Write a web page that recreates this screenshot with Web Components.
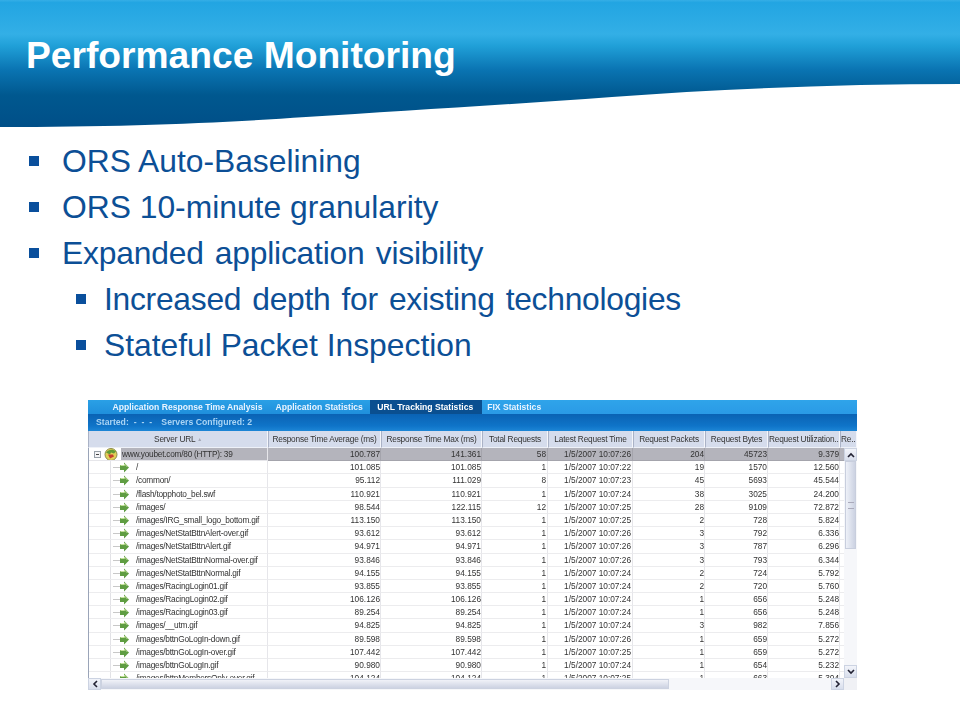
<!DOCTYPE html>
<html>
<head>
<meta charset="utf-8">
<title>Performance Monitoring</title>
<style>
html, body { margin: 0; background: #fff; }
body { width: 960px; height: 720px; overflow: hidden; font-family: "Liberation Sans", Arial, sans-serif; }
</style>
</head>
<body>
<slide-header>Performance Monitoring</slide-header>
<slide-bullets>
  <slide-bullet>ORS Auto-Baselining</slide-bullet>
  <slide-bullet>ORS 10-minute granularity</slide-bullet>
  <slide-bullet spread>Expanded application visibility</slide-bullet>
  <slide-bullet sub spread>Increased depth for existing technologies</slide-bullet>
  <slide-bullet sub>Stateful Packet Inspection</slide-bullet>
</slide-bullets>
<stat-window></stat-window>

<script>
class SlideHeader extends HTMLElement {
    constructor() {
        super();
        this.attachShadow({ mode: 'open' });
        this.shadowRoot.innerHTML = `
            <style>
                :host {
                    display: block;
                    height: 128px;
                    box-sizing: border-box;
                    padding: 34px 0 0 26px;
                    background-image: url("data:image/svg+xml,%3Csvg xmlns='http://www.w3.org/2000/svg' width='960' height='128'%3E%3Cdefs%3E%3ClinearGradient id='g' x1='0' y1='0' x2='0' y2='1'%3E%3Cstop offset='0' stop-color='%2335aee6'/%3E%3Cstop offset='.02' stop-color='%2322a5e2'/%3E%3Cstop offset='.27' stop-color='%2333afe6'/%3E%3Cstop offset='.36' stop-color='%2320a0d8'/%3E%3Cstop offset='.55' stop-color='%230a74b2'/%3E%3Cstop offset='.75' stop-color='%2300588f'/%3E%3Cstop offset='1' stop-color='%23004f88'/%3E%3C/linearGradient%3E%3C/defs%3E%3Cpath fill='url(%23g)' d='M0 0H960V84C840 84 720 89 612 97C500 105 400 111 306 117C220 123 120 127 0 127Z'/%3E%3C/svg%3E");
                    color: #fff;
                    font: bold 37.2px/42px "Liberation Sans", Arial, sans-serif;
                }
            </style>
            <slot></slot>
        `;
    }
}

class SlideBullets extends HTMLElement {
    constructor() {
        super();
        this.attachShadow({ mode: 'open' });
        this.shadowRoot.innerHTML = `
            <style>
                :host {
                    display: flex;
                    flex-direction: column;
                    padding: 10px 0 0 29px;
                    height: 272px;
                    box-sizing: border-box;
                    color: #0c4f96;
                    font: 31.8px/46px "Liberation Sans", Arial, sans-serif;
                }
            </style>
            <slot></slot>
        `;
    }
}

class SlideBullet extends HTMLElement {
    constructor() {
        super();
        this.attachShadow({ mode: 'open' });
        this.shadowRoot.innerHTML = `
            <style>
                :host {
                    display: flex;
                    align-items: center;
                    height: 46px;
                }
                :host([sub]) { padding-left: 47px; }
                :host([spread]) { letter-spacing: -0.2px; word-spacing: 2.5px; }
                :host([sub][spread]) { letter-spacing: -0.27px; }
                .mark {
                    flex: none;
                    width: 10px;
                    height: 10px;
                    margin-right: 23px;
                    background: #0a4f9c;
                }
                :host([sub]) .mark { margin-right: 18px; }
            </style>
            <span class="mark"></span>
            <span><slot></slot></span>
        `;
    }
}

const COLUMNS = '180px 113px 101px 66px 85px 72px 63px 72px 17px';

class StatTabs extends HTMLElement {
    constructor() {
        super();
        this.attachShadow({ mode: 'open' });
        this.shadowRoot.innerHTML = `
            <style>
                :host {
                    display: flex;
                    height: 14px;
                    padding-left: 18px;
                    background: linear-gradient(#2aa0e6, #1f8fdc);
                    color: #e8f4ff;
                    font: bold 8.6px/14px "Liberation Sans", Arial, sans-serif;
                }
                span { padding: 0 6.5px; white-space: nowrap; }
                .stats { padding-right: 7.5px; }
                .on { background: #0a4f90; color: #fff; padding: 0 9px 0 7px; }
                .fix { flex: 1; padding-left: 5px; background: linear-gradient(#2fa4ea, #2a9ae6); }
            </style>
            <span>Application Response Time Analysis</span>
            <span class="stats">Application Statistics</span>
            <span class="on">URL Tracking Statistics</span>
            <span class="fix">FIX Statistics</span>
        `;
    }
}

class StatStatus extends HTMLElement {
    constructor() {
        super();
        this.attachShadow({ mode: 'open' });
        this.shadowRoot.innerHTML = `
            <style>
                :host {
                    display: flex;
                    height: 17px;
                    padding-left: 8px;
                    background: linear-gradient(#0a62b4, #0f74c8 70%, #1c86d6);
                    color: #a9d4f4;
                    font: bold 8.7px/17px "Liberation Sans", Arial, sans-serif;
                }
                .dash { margin: 0 8px 0 5px; letter-spacing: 1.2px; }
            </style>
            <span>Started:</span>
            <span class="dash">- - -</span>
            <span>Servers Configured: 2</span>
        `;
    }
}

class StatHead extends HTMLElement {
    constructor() {
        super();
        this.attachShadow({ mode: 'open' });
        const names = ['Server URL <i>\u25B2</i>', 'Response Time Average (ms)', 'Response Time Max (ms)', 'Total Requests',
            'Latest Request Time', 'Request Packets', 'Request Bytes', 'Request Utilization...', 'Re...'];
        this.shadowRoot.innerHTML = `
            <style>
                :host {
                    display: grid;
                    grid-template-columns: ${COLUMNS};
                    height: 17px;
                    color: #333;
                    font: 8.3px/16px "Liberation Sans", Arial, sans-serif;
                    letter-spacing: -0.2px;
                }
                span {
                    background: #d5dcec;
                    border-right: 1px solid #f4f6fb;
                    border-left: 1px solid #aab2c6;
                    border-bottom: 1px solid #eef1f8;
                    text-align: center;
                    white-space: nowrap;
                    overflow: hidden;
                }
                i { font-style: normal; font-size: 5px; color: #a4a8b6; vertical-align: 1px; }
            </style>
            ${names.map(n => `<span>${n}</span>`).join('')}
        `;
    }
}

class StatRow extends HTMLElement {
    constructor() {
        super();
        this.attachShadow({ mode: 'open' });
    }

    connectedCallback() {
        const cells = this.getAttribute('cells').split('|');
        const url = cells.shift();
        const group = this.hasAttribute('group');
        const tree = group
            ? `<svg class="tree" width="33" height="13" viewBox="0 0 33 13">
                   <rect x="6.5" y="3.5" width="6" height="6" fill="#f4f4f6" stroke="#98a0a8" />
                   <path d="M8 6.5h3" stroke="#444" />
                   <circle cx="23" cy="6.5" r="6" fill="#e2cf58" stroke="#8c8c4c" />
                   <path d="M18 4.5c2-3 7-4 10-1l-2 2-3-1-1 2z" fill="#5f9a35" />
                   <path d="M20 6.5h5l1 2-4 2z" fill="#c6402e" />
               </svg>`
            : `<svg class="tree" width="48" height="13" viewBox="0 0 48 13">
                   <path d="M22.5 0v13" stroke="#e2e2e6" />
                   <path d="M25 6.5h7" stroke="#c8c8c8" />
                   <path d="M32 4h4V1.500l5 5-5 5V9h-4z" fill="#5f9d42" />
                   <path d="M32.500 4.500h4V3l3 3" fill="none" stroke="#c4e09c" />
               </svg>`;
        this.shadowRoot.innerHTML = `
            <style>
                :host {
                    display: grid;
                    grid-template-columns: ${COLUMNS};
                    height: 13.2px;
                    color: #333;
                    font: 8.3px/13px "Liberation Sans", Arial, sans-serif;
                }
                :host([group]) { background: #b4b4bc; }
                div {
                    border-right: 1px solid #e6e6ea;
                    border-bottom: 1px solid #ececee;
                    text-align: right;
                    white-space: nowrap;
                    overflow: hidden;
                }
                div:nth-of-type(4), div:nth-of-type(5) { padding-right: 1px; }
                :host([group]) div { border-color: #a4a4ac; }
                .url { display: flex; text-align: left; background: #fff; letter-spacing: -0.25px; }
                .url b { font-weight: normal; }
                :host([group]) .url { border-color: #e6e6ea; }
                :host([group]) .url b { background: #b4b4bc; flex: 1; padding-left: 1px; }
                .tree { flex: none; }
            </style>
            <div class="url">${tree}<b>${url}</b></div>
            ${cells.map(c => `<div>${c}</div>`).join('')}
        `;
    }
}

class StatScrollbars extends HTMLElement {
    constructor() {
        super();
        this.attachShadow({ mode: 'open' });
        this.shadowRoot.innerHTML = `
            <style>
                :host { display: contents; }
                .v, .h {
                    position: absolute;
                    display: flex;
                    background: #f6f7fa;
                }
                .v { flex-direction: column; right: 0; top: 48px; width: 13px; height: 230px; }
                .h { left: 0; bottom: 0; width: 756px; height: 12px; }
                .btn {
                    flex: none;
                    width: 13px;
                    height: 13px;
                    display: flex;
                    align-items: center;
                    justify-content: center;
                    background: linear-gradient(#f2f4fa, #d8deec);
                    border: 1px solid #ccd3e2;
                    box-sizing: border-box;
                }
                .h .btn { height: 12px; }
                .thumb-v {
                    display: flex;
                    align-items: center;
                    justify-content: center;
                    margin: 0 1px;
                    height: 86px;
                    background: linear-gradient(90deg, #eef1f8, #ccd2e2);
                    border: 1px solid #c8cedd;
                }
                .thumb-v::after { content: ""; width: 6px; height: 5px; border-top: 1px solid #aab; border-bottom: 1px solid #aab; }
                .fill { flex: 1; }
                .thumb-h { flex: none; width: 568px; margin: 1px 0; background: linear-gradient(#f0f2f8, #ccd2e2); border: 1px solid #ccd2e0; box-sizing: border-box; }
                .grip { position: absolute; right: 0; bottom: 0; width: 13px; height: 12px; background: #f0f1f5; }
            </style>
            <div class="v">
                <span class="btn"><svg width="8" height="6"><path d="M1 5l3-3 3 3" fill="none" stroke="#223" stroke-width="1.6"/></svg></span>
                <span class="thumb-v"></span>
                <span class="fill"></span>
                <span class="btn"><svg width="8" height="6"><path d="M1 1l3 3 3-3" fill="none" stroke="#223" stroke-width="1.6"/></svg></span>
            </div>
            <div class="h">
                <span class="btn"><svg width="6" height="8"><path d="M5 1L2 4l3 3" fill="none" stroke="#223" stroke-width="1.6"/></svg></span>
                <span class="thumb-h"></span>
                <span class="fill"></span>
                <span class="btn"><svg width="6" height="8"><path d="M1 1l3 3-3 3" fill="none" stroke="#223" stroke-width="1.6"/></svg></span>
            </div>
            <div class="grip"></div>
        `;
    }
}

const D = '1/5/2007 10:07:';
const ROWS = [
    '/|101.085|101.085|1|22|19|1570|12.560',
    '/common/|95.112|111.029|8|23|45|5693|45.544',
    '/flash/topphoto_bel.swf|110.921|110.921|1|24|38|3025|24.200',
    '/images/|98.544|122.115|12|25|28|9109|72.872',
    '/images/IRG_small_logo_bottom.gif|113.150|113.150|1|25|2|728|5.824',
    '/images/NetStatBttnAlert-over.gif|93.612|93.612|1|26|3|792|6.336',
    '/images/NetStatBttnAlert.gif|94.971|94.971|1|26|3|787|6.296',
    '/images/NetStatBttnNormal-over.gif|93.846|93.846|1|26|3|793|6.344',
    '/images/NetStatBttnNormal.gif|94.155|94.155|1|24|2|724|5.792',
    '/images/RacingLogin01.gif|93.855|93.855|1|24|2|720|5.760',
    '/images/RacingLogin02.gif|106.126|106.126|1|24|1|656|5.248',
    '/images/RacingLogin03.gif|89.254|89.254|1|24|1|656|5.248',
    '/images/__utm.gif|94.825|94.825|1|24|3|982|7.856',
    '/images/bttnGoLogIn-down.gif|89.598|89.598|1|26|1|659|5.272',
    '/images/bttnGoLogIn-over.gif|107.442|107.442|1|25|1|659|5.272',
    '/images/bttnGoLogIn.gif|90.980|90.980|1|24|1|654|5.232',
    '/images/bttnMembersOnly-over.gif|104.124|104.124|1|25|1|663|5.304'
];

class StatWindow extends HTMLElement {
    constructor() {
        super();
        this.attachShadow({ mode: 'open' });
    }

    connectedCallback() {
        const withDate = r => {
            const p = r.split('|');
            p[4] = D + p[4];
            return p.join('|') + '|';
        };
        this.shadowRoot.innerHTML = `
            <style>
                :host {
                    display: block;
                    position: relative;
                    width: 769px;
                    height: 290px;
                    margin-left: 88px;
                    overflow: hidden;
                    background: #fff;
                    filter: blur(0.4px);
                }
                .body {
                    height: 230px;
                    margin-right: 13px;
                    overflow: hidden;
                    border-left: 1px solid #9aa4b8;
                    box-sizing: border-box;
                }
                .body stat-row { margin-left: -1px; width: 769px; }
            </style>
            <stat-tabs></stat-tabs>
            <stat-status></stat-status>
            <stat-head></stat-head>
            <div class="body">
                <stat-row group cells="www.youbet.com/80 (HTTP): 39|100.787|141.361|58|1/5/2007 10:07:26|204|45723|9.379|"></stat-row>
                ${ROWS.map(r => `<stat-row cells="${withDate(r)}"></stat-row>`).join('')}
            </div>
            <stat-scrollbars></stat-scrollbars>
        `;
    }
}

customElements.define('slide-header', SlideHeader);
customElements.define('slide-bullets', SlideBullets);
customElements.define('slide-bullet', SlideBullet);
customElements.define('stat-tabs', StatTabs);
customElements.define('stat-status', StatStatus);
customElements.define('stat-head', StatHead);
customElements.define('stat-row', StatRow);
customElements.define('stat-scrollbars', StatScrollbars);
customElements.define('stat-window', StatWindow);
</script>
</body>
</html>
